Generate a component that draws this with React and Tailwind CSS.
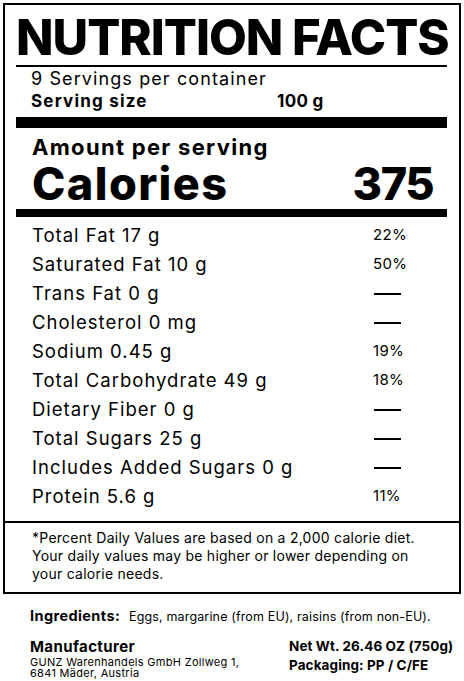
import React from 'react';

const nutrients = [
    { label: 'Total Fat 17 g', value: '22%' },
    { label: 'Saturated Fat 10 g', value: '50%' },
    { label: 'Trans Fat 0 g', value: null },
    { label: 'Cholesterol 0 mg', value: null },
    { label: 'Sodium 0.45 g', value: '19%' },
    { label: 'Total Carbohydrate 49 g', value: '18%' },
    { label: 'Dietary Fiber 0 g', value: null },
    { label: 'Total Sugars 25 g', value: null },
    { label: 'Includes Added Sugars 0 g', value: null },
    { label: 'Protein 5.6 g', value: '11%' },
];

function Row({ label, value }) {
    return (
        <div className="flex items-center h-[29px]">
            <span className="w-[341px] shrink-0 text-[18.5px] tracking-[1px]">{label}</span>
            {value ? (
                <span className="text-[15px] tracking-[0.3px]">{value}</span>
            ) : (
                <span className="block w-[27px] h-[2px] bg-black ml-px" />
            )}
        </div>
    );
}

export default function App() {
    return (
        <div className="bg-white text-black w-[464px] h-[681px] overflow-hidden pt-[3px] pl-[3px]" style={{ fontFamily: 'Inter, "Noto Sans", sans-serif' }}>
            <div className="w-[458px] border-2 border-black">
                <div className="pl-[11px] pr-[12px]">
                    <h1 className="text-[49px] font-extrabold leading-none tracking-[-1px] whitespace-nowrap pt-[8px] pb-[3px] text-center">
                        NUTRITION FACTS
                    </h1>
                    <div className="h-[2px] bg-black" />
                    <div className="pl-[15px] pt-[1px]">
                        <div className="text-[18px] leading-[22px] tracking-[1.1px]">9 Servings per container</div>
                        <div className="flex text-[17px] font-bold leading-[22px] tracking-[1.2px]">
                            <span className="w-[246px] shrink-0">Serving size</span>
                            <span className="tracking-[0.3px]">100 g</span>
                        </div>
                    </div>
                    <div className="h-[11px] bg-black mt-[5px]" />
                    <div className="pl-[16px] pr-[14px] pt-[6px]">
                        <div className="text-[22px] font-bold leading-[26px] tracking-[1.3px]">Amount per serving</div>
                        <div className="flex justify-between items-baseline text-[45px] font-extrabold leading-[48px]">
                            <span className="tracking-[1.4px]">Calories</span>
                            <span className="tracking-[-1.5px]">375</span>
                        </div>
                    </div>
                    <div className="h-[8px] bg-black mt-[1px]" />
                    <div className="pl-[16px] pt-[4px] pb-[10px]">
                        {nutrients.map((n) => (
                            <Row key={n.label} label={n.label} value={n.value} />
                        ))}
                    </div>
                </div>
                <div className="border-t-2 border-black pl-[27px] pr-[12px] pt-[6px] pb-[9px] text-[14px] leading-[18px] tracking-[0.25px]">
                    *Percent Daily Values are based on a 2,000 calorie diet.
                    <br />
                    Your daily values may be higher or lower depending on
                    <br />
                    your calorie needs.
                </div>
            </div>
            <div className="pl-[27px] pr-[4px] pt-[12px]">
                <div className="flex items-baseline leading-[20px] whitespace-nowrap">
                    <span className="text-[14.5px] font-bold tracking-[0.4px] w-[99px] shrink-0">Ingredients:</span>
                    <span className="text-[12.5px] tracking-[0.15px]">Eggs, margarine (from EU), raisins (from non-EU).</span>
                </div>
                <div className="flex mt-[10px] whitespace-nowrap">
                    <div className="w-[259px] shrink-0">
                        <div className="text-[15px] font-bold leading-[20px] tracking-[0.4px]">Manufacturer</div>
                        <div className="text-[11px] leading-[11px] tracking-[0.3px]">GUNZ Warenhandels GmbH Zollweg 1,</div>
                        <div className="text-[11px] leading-[11px] tracking-[0.3px]">6841 Mäder, Austria</div>
                    </div>
                    <div className="text-[13.5px] font-bold leading-[19px] tracking-[0.1px]">
                        <div>Net Wt. 26.46 OZ (750g)</div>
                        <div>Packaging: PP / C/FE</div>
                    </div>
                </div>
            </div>
        </div>
    );
}
